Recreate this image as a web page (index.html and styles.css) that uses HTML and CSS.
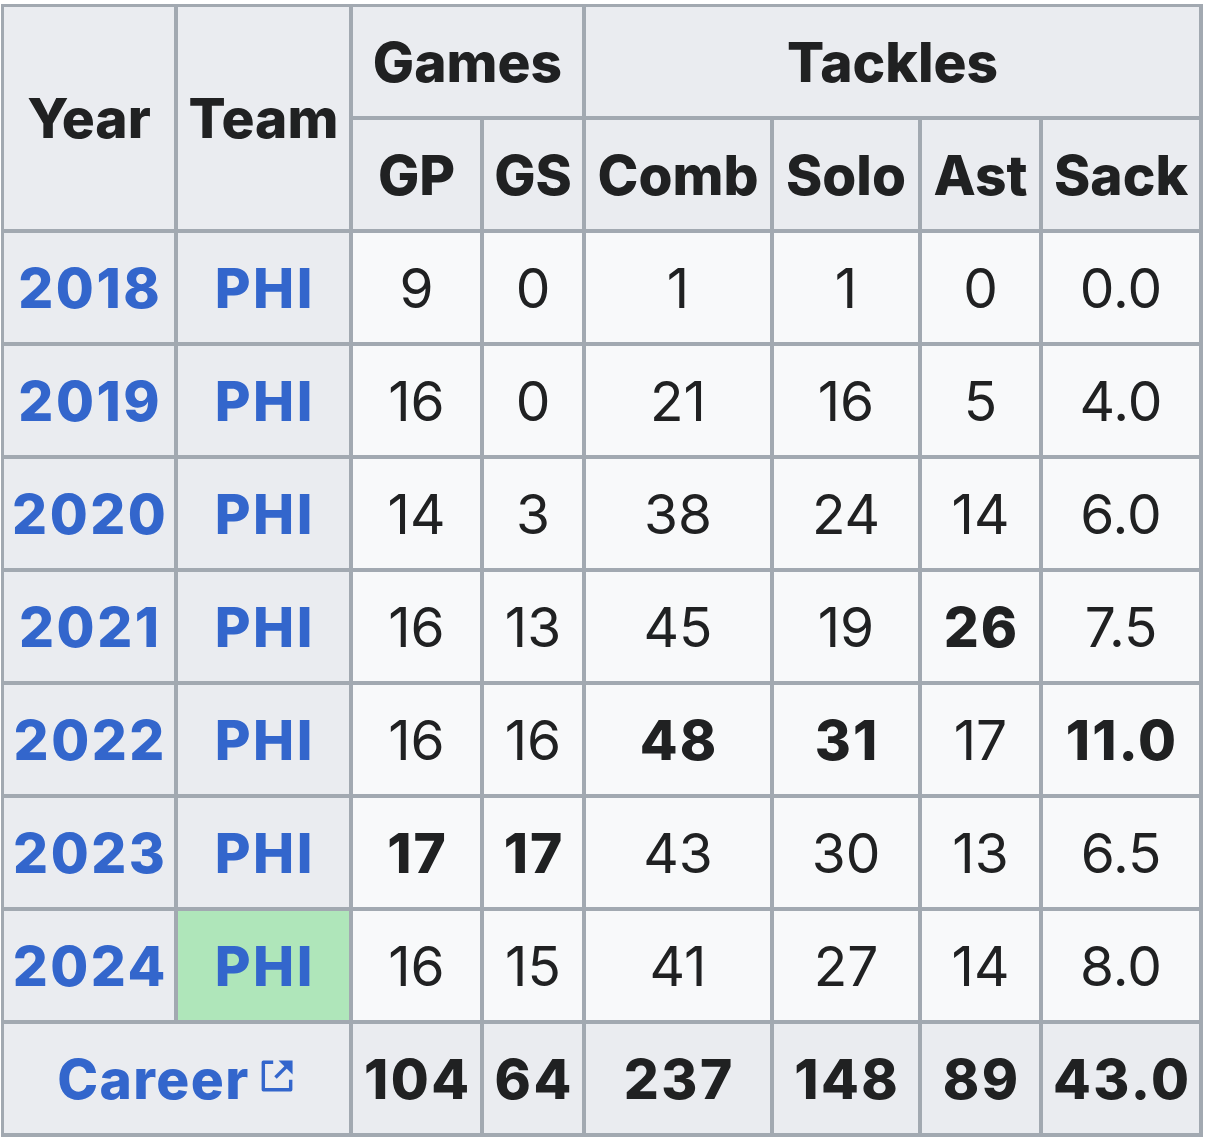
FILE: index.html
```html
<!DOCTYPE html>
<html lang="en">
<head>
<meta charset="utf-8">
<title>Stats</title>
<link rel="stylesheet" href="styles.css">
</head>
<body>
<table class="stats">
  <colgroup>
    <col class="c-year"><col class="c-team"><col class="c-gp"><col class="c-gs">
    <col class="c-comb"><col class="c-solo"><col class="c-ast"><col class="c-sack">
  </colgroup>
  <thead>
    <tr>
      <th rowspan="2">Year</th>
      <th rowspan="2">Team</th>
      <th colspan="2">Games</th>
      <th colspan="4">Tackles</th>
    </tr>
    <tr>
      <th>GP</th><th>GS</th><th>Comb</th><th>Solo</th><th>Ast</th><th>Sack</th>
    </tr>
  </thead>
  <tbody>
    <tr><th><a>2018</a></th><th><a>PHI</a></th><td>9</td><td>0</td><td>1</td><td>1</td><td>0</td><td>0.0</td></tr>
    <tr><th><a>2019</a></th><th><a>PHI</a></th><td>16</td><td>0</td><td>21</td><td>16</td><td>5</td><td>4.0</td></tr>
    <tr><th><a>2020</a></th><th><a>PHI</a></th><td>14</td><td>3</td><td>38</td><td>24</td><td>14</td><td>6.0</td></tr>
    <tr><th><a>2021</a></th><th><a>PHI</a></th><td>16</td><td>13</td><td>45</td><td>19</td><td><b>26</b></td><td>7.5</td></tr>
    <tr><th><a>2022</a></th><th><a>PHI</a></th><td>16</td><td>16</td><td><b>48</b></td><td><b>31</b></td><td>17</td><td><b>11.0</b></td></tr>
    <tr><th><a>2023</a></th><th><a>PHI</a></th><td><b>17</b></td><td><b>17</b></td><td>43</td><td>30</td><td>13</td><td>6.5</td></tr>
    <tr><th><a>2024</a></th><th class="champ"><a>PHI</a></th><td>16</td><td>15</td><td>41</td><td>27</td><td>14</td><td>8.0</td></tr>
    <tr class="career">
      <th colspan="2"><a class="ext"><span class="ext-text">Career</span><svg class="ext-icon" viewBox="0 0 10 10" aria-hidden="true"><path class="box" d="M4 1.4H1.4V8.6H8.6V6"/><path class="arrow" d="M4.6 5.4L8.2 1.8"/><path class="head" d="M5.4 0.9H9.1V4.6Z"/></svg></a></th>
      <td>104</td><td>64</td><td>237</td><td>148</td><td>89</td><td>43.0</td>
    </tr>
  </tbody>
</table>
</body>
</html>
```
FILE: styles.css
```css
html, body {
  margin: 0;
  padding: 0;
  background: #ffffff;
}

body {
  font-family: Inter, "Noto Sans", "Liberation Sans", sans-serif;
  color: #202122;
}

.stats {
  margin: 4px 0 0 1px;
  width: 1202px;
  table-layout: fixed;
  border-collapse: separate;
  border-spacing: 0;
  border-left: 3px solid #a2a9b1;
  border-top: 3px solid #a2a9b1;
  font-size: 55px;
  line-height: 1.2;
}

.c-year { width: 174px; }
.c-team { width: 175px; }
.c-gp { width: 131px; }
.c-gs { width: 102px; }
.c-comb { width: 188px; }
.c-solo { width: 148px; }
.c-ast { width: 121px; }
.c-sack { width: 160px; }

.stats tr {
  height: 113px;
}

.stats th,
.stats td {
  box-sizing: border-box;
  padding: 0;
  text-align: center;
  vertical-align: middle;
  border-right: 4px solid #a2a9b1;
  border-bottom: 4px solid #a2a9b1;
  white-space: nowrap;
}

.stats th {
  background: #eaecf0;
  font-weight: 800;
}

.stats td {
  background: #f8f9fa;
  font-weight: 400;
}

.stats td b {
  font-weight: 800;
  letter-spacing: 2px;
  margin-right: -2px;
}

.stats a {
  color: #3366cc;
  text-decoration: none;
  letter-spacing: 2.5px;
  margin-right: -2.5px;
}

.stats th.champ {
  background: #afe6ba;
}

.stats .career td {
  background: #eaecf0;
  font-weight: 800;
  letter-spacing: 2.5px;
  text-indent: 2.5px;
}

.stats a.ext {
  display: inline-flex;
  align-items: center;
  gap: 8px;
  letter-spacing: 1.4px;
  margin-right: 0;
}

.ext-icon {
  width: 38px;
  height: 38px;
  margin-top: -6px;
}

.ext-icon .box,
.ext-icon .arrow {
  fill: none;
  stroke: #3366cc;
  stroke-width: 0.9;
  stroke-linejoin: round;
  stroke-linecap: butt;
}

.ext-icon .head {
  fill: #3366cc;
}
```
